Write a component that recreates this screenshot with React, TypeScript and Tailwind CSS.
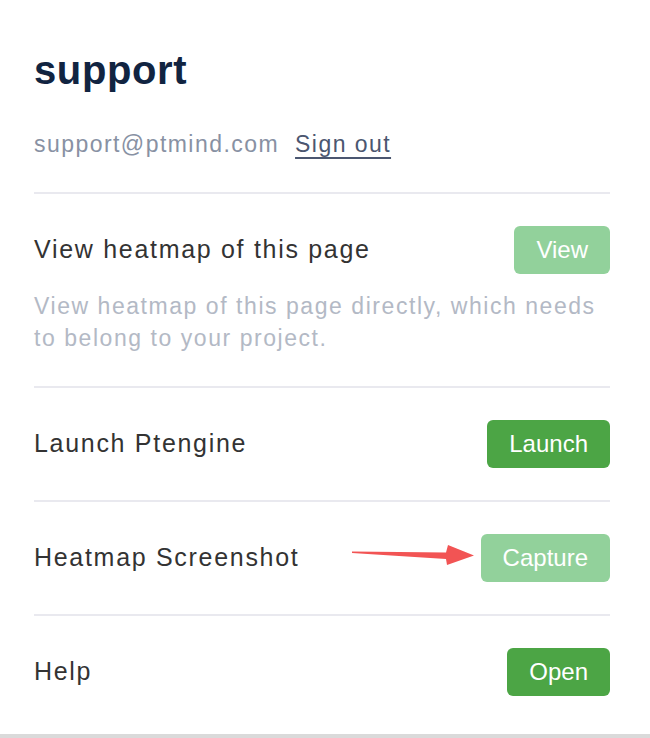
import React from 'react';

type Row = {
  label: string;
  action: string;
  tone: 'light' | 'solid';
  description?: string;
  arrow?: boolean;
};

const rows: Row[] = [
  {
    label: 'View heatmap of this page',
    action: 'View',
    tone: 'light',
    description: 'View heatmap of this page directly, which needs to belong to your project.',
  },
  { label: 'Launch Ptengine', action: 'Launch', tone: 'solid' },
  { label: 'Heatmap Screenshot', action: 'Capture', tone: 'light', arrow: true },
  { label: 'Help', action: 'Open', tone: 'solid' },
];

const Divider = () => <div className="h-[2px] bg-[#e9e9ef]" />;

const ActionButton: React.FC<{ label: string; tone: Row['tone'] }> = ({ label, tone }) => (
  <button
    className={[
      'h-[48px] px-[22px] rounded-[6px] text-white text-[24px] leading-none',
      tone === 'solid' ? 'bg-[#4ca545]' : 'bg-[#92d19b]',
    ].join(' ')}
  >
    {label}
  </button>
);

// red pointer drawn over the screenshot row
const Arrow = () => (
  <svg
    className="absolute left-[316px] top-[38px]"
    width="128"
    height="30"
    viewBox="0 0 128 30"
    fill="none"
  >
    <polygon
      points="2,11.5 96,12.5 98,5 124,15.5 97,25 96,19 2,13"
      fill="#f25454"
    />
  </svg>
);

export default function App() {
  return (
    <div className="min-h-[738px] flex flex-col bg-white font-['Liberation_Sans',Arial,sans-serif]">
      <div className="flex-1 pl-[34px] pr-[40px] pt-[46px]">
        <h1 className="text-[40px] leading-[48px] font-bold tracking-[0.6px] text-[#112441]">support</h1>
        <div className="mt-[34px] mb-[32px] flex items-center gap-[16px] text-[23px] leading-[32px] tracking-[1.45px]">
          <span className="text-[#8891a3]">support@ptmind.com</span>
          <a className="text-[#4b5670] underline underline-offset-[5px] decoration-[2px]">Sign out</a>
        </div>

        {rows.map((row) => (
          <div key={row.label}>
            <Divider />
            <div className="relative py-[32px]">
              <div className="flex items-center justify-between">
                <span className="text-[25px] tracking-[1.7px] text-[#333333]">{row.label}</span>
                <ActionButton label={row.action} tone={row.tone} />
              </div>
              {row.description && (
                <p className="mt-[16px] text-[23px] leading-[32px] tracking-[1.55px] text-[#b3b9c5]">
                  {row.description}
                </p>
              )}
              {row.arrow && <Arrow />}
            </div>
          </div>
        ))}
      </div>
      <div className="h-[4px] bg-[#dadada]" />
    </div>
  );
}
